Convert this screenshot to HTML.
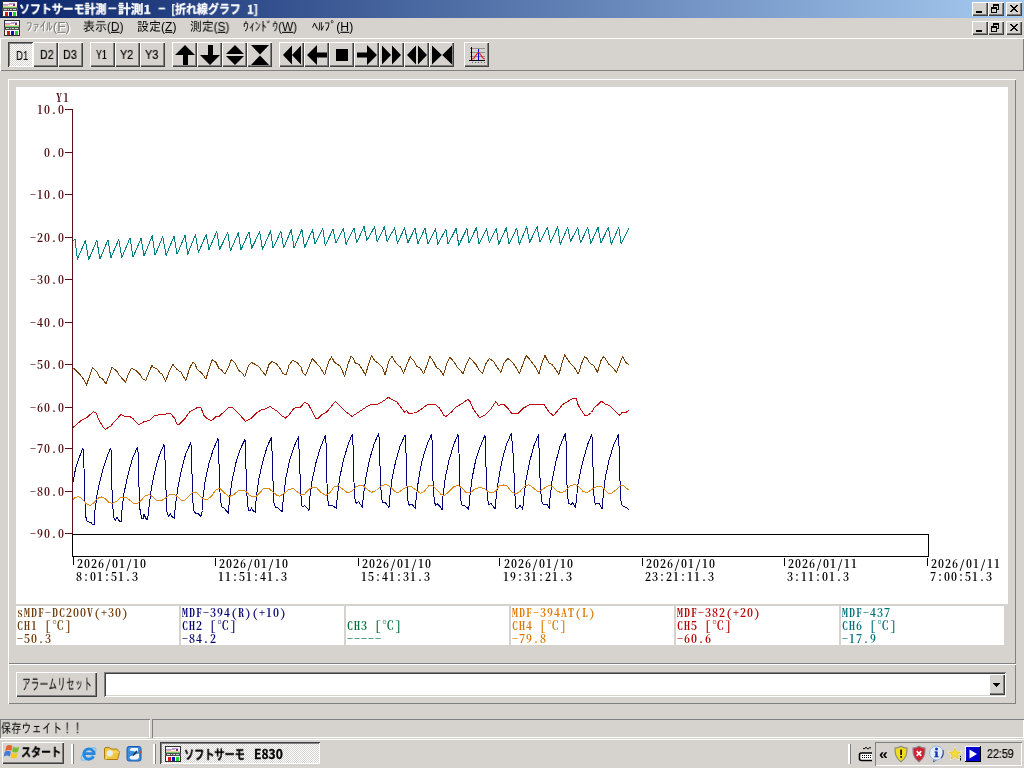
<!DOCTYPE html>
<html lang="ja"><head><meta charset="utf-8"><title>ソフトサーモ計測</title>
<style>
*{box-sizing:border-box;margin:0;padding:0}
html,body{width:1024px;height:768px;overflow:hidden;background:#D6D3CE}
body{position:relative;font-family:"Liberation Sans","IPAGothic","Noto Sans CJK JP",sans-serif;font-size:12px;color:#000}
div,span,svg{position:absolute}
.t{white-space:pre;line-height:1;transform-origin:0 0;will-change:transform}
.btn{background:#D6D3CE;box-shadow:inset 1px 1px 0 #fff,inset -1px -1px 0 #404040,inset -2px -2px 0 #808080}
.btnp{background:#EAE9E6 repeating-conic-gradient(#fff 0% 25%,#D6D3CE 0% 50%) 0 0/2px 2px;box-shadow:inset 1px 1px 0 #404040,inset -1px -1px 0 #fff,inset 2px 2px 0 #808080}
.sunk{box-shadow:inset 1px 1px 0 #808080,inset -1px -1px 0 #fff}
.sunk2{box-shadow:inset 1px 1px 0 #808080,inset -1px -1px 0 #fff,inset 2px 2px 0 #404040,inset -2px -2px 0 #D6D3CE}
.rais{box-shadow:inset 1px 1px 0 #fff,inset -1px -1px 0 #808080}
.mono{will-change:transform;font-family:"Noto Serif CJK SC","IPAGothic","Liberation Mono",monospace;font-feature-settings:"hwid";font-weight:600;font-size:12px;letter-spacing:1px;line-height:13px;white-space:pre;margin-top:-1px}
</style></head>
<body>
<div style="left:0;top:0;width:1024px;height:18px;background:linear-gradient(90deg,#0A246A 0%,#A6CAF0 100%)"></div>
<svg style="left:2px;top:1px" width="16" height="16" viewBox="0 0 16 16" shape-rendering="crispEdges"><rect x="0" y="0" width="16" height="16" fill="#303030"/><rect x="1" y="1" width="14" height="5" fill="#F6F6FE"/><rect x="1" y="3" width="6" height="1" fill="#B09CDC"/><rect x="7" y="2" width="6" height="1" fill="#B09CDC"/><rect x="1" y="4" width="5" height="1" fill="#ECA8B8"/><rect x="6" y="3" width="4" height="1" fill="#E498AC"/><rect x="11" y="3" width="2" height="2" fill="#803070"/><rect x="1" y="5" width="14" height="1" fill="#E8D8A0"/><rect x="1" y="6" width="14" height="1" fill="#70C868"/><rect x="0" y="7" width="16" height="3" fill="#505050"/><rect x="2" y="8" width="3" height="1" fill="#D0D0D0"/><rect x="6" y="8" width="1" height="1" fill="#D0D0D0"/><rect x="8" y="8" width="2" height="1" fill="#D0D0D0"/><rect x="11" y="8" width="3" height="1" fill="#D0D0D0"/><rect x="1" y="10" width="14" height="5" fill="#FFFFFF"/><rect x="3" y="11" width="3" height="4" fill="#D81818"/><rect x="7" y="11" width="3" height="4" fill="#1010C0"/><rect x="11" y="11" width="3" height="4" fill="#18D828"/></svg>
<div id="title" style="left:0;top:0;width:960px;height:18px"><div class="t" id="ta" style="left:18.86px;top:2.97px;font-family:'Noto Sans CJK JP','IPAGothic','Liberation Sans',sans-serif;font-size:12px;font-weight:700;color:#fff;-webkit-text-stroke:.3px #fff;transform:scale(0.910,0.978)">ソフトサーモ計測</div><div class="t" id="tb" style="left:106.96px;top:2.17px;font-family:'Noto Sans CJK JP','IPAGothic','Liberation Sans',sans-serif;font-size:12px;font-weight:700;color:#fff;-webkit-text-stroke:.3px #fff;transform:scale(0.882,0.978)">－</div><div class="t" id="tc" style="left:118.39px;top:2.97px;font-family:'Noto Sans CJK JP','IPAGothic','Liberation Sans',sans-serif;font-size:12px;font-weight:700;color:#fff;-webkit-text-stroke:.3px #fff;transform:scale(1.058,0.978)">計測1</div><div class="t" id="td" style="left:157.99px;top:0.95px;font-family:'Noto Sans CJK JP','IPAGothic','Liberation Sans',sans-serif;font-size:12px;font-weight:700;color:#fff;-webkit-text-stroke:.3px #fff;transform:scale(1.714,0.978)">-</div><div class="t" id="te" style="left:171.36px;top:2.97px;font-family:'Noto Sans CJK JP','IPAGothic','Liberation Sans',sans-serif;font-size:12px;font-weight:700;color:#fff;-webkit-text-stroke:.3px #fff;transform:scale(0.912,0.978)">[折れ線グラフ</div><div class="t" id="tf" style="left:247.20px;top:2.97px;font-family:'Noto Sans CJK JP','IPAGothic','Liberation Sans',sans-serif;font-size:12px;font-weight:700;color:#fff;-webkit-text-stroke:.3px #fff;transform:scale(0.947,0.978)">1]</div></div>
<div class="btn" style="left:972px;top:2px;width:16px;height:14px"><svg width="16" height="14" shape-rendering="crispEdges" style="left:0;top:0"><rect x="4" y="9" width="6" height="2" fill="#000"/></svg></div><div class="btn" style="left:988px;top:2px;width:16px;height:14px"><svg width="16" height="14" shape-rendering="crispEdges" style="left:0;top:0"><rect x="5" y="2" width="6" height="2" fill="#000"/><rect x="5" y="2" width="1" height="4" fill="#000"/><rect x="10" y="2" width="1" height="6" fill="#000"/><rect x="9" y="7" width="2" height="1" fill="#000"/><rect x="3" y="5" width="6" height="2" fill="#000"/><rect x="3" y="5" width="1" height="6" fill="#000"/><rect x="8" y="5" width="1" height="6" fill="#000"/><rect x="3" y="10" width="6" height="1" fill="#000"/></svg></div><div class="btn" style="left:1006px;top:2px;width:16px;height:14px"><svg width="16" height="14" shape-rendering="crispEdges" style="left:0;top:0"><path d="M4 3h2v1h1v1h2v-1h1v-1h2v1h-1v1h-1v1h-1v1h1v1h1v1h1v1h-2v-1h-1v-1h-2v1h-1v1h-2v-1h1v-1h1v-1h1v-1h-1v-1h-1v-1h-1z" fill="#000"/></svg></div>
<svg style="left:4px;top:20px" width="16" height="16" viewBox="0 0 16 16" shape-rendering="crispEdges"><rect x="0" y="0" width="16" height="16" fill="#303030"/><rect x="1" y="1" width="14" height="5" fill="#F6F6FE"/><rect x="1" y="3" width="6" height="1" fill="#B09CDC"/><rect x="7" y="2" width="6" height="1" fill="#B09CDC"/><rect x="1" y="4" width="5" height="1" fill="#ECA8B8"/><rect x="6" y="3" width="4" height="1" fill="#E498AC"/><rect x="11" y="3" width="2" height="2" fill="#803070"/><rect x="1" y="5" width="14" height="1" fill="#E8D8A0"/><rect x="1" y="6" width="14" height="1" fill="#70C868"/><rect x="0" y="7" width="16" height="3" fill="#505050"/><rect x="2" y="8" width="3" height="1" fill="#D0D0D0"/><rect x="6" y="8" width="1" height="1" fill="#D0D0D0"/><rect x="8" y="8" width="2" height="1" fill="#D0D0D0"/><rect x="11" y="8" width="3" height="1" fill="#D0D0D0"/><rect x="1" y="10" width="14" height="5" fill="#FFFFFF"/><rect x="3" y="11" width="3" height="4" fill="#D81818"/><rect x="7" y="11" width="3" height="4" fill="#1010C0"/><rect x="11" y="11" width="3" height="4" fill="#18D828"/></svg>
<div class="btn" style="left:972px;top:21px;width:16px;height:14px"><svg width="16" height="14" shape-rendering="crispEdges" style="left:0;top:0"><rect x="4" y="9" width="6" height="2" fill="#000"/></svg></div><div class="btn" style="left:988px;top:21px;width:16px;height:14px"><svg width="16" height="14" shape-rendering="crispEdges" style="left:0;top:0"><rect x="5" y="2" width="6" height="2" fill="#000"/><rect x="5" y="2" width="1" height="4" fill="#000"/><rect x="10" y="2" width="1" height="6" fill="#000"/><rect x="9" y="7" width="2" height="1" fill="#000"/><rect x="3" y="5" width="6" height="2" fill="#000"/><rect x="3" y="5" width="1" height="6" fill="#000"/><rect x="8" y="5" width="1" height="6" fill="#000"/><rect x="3" y="10" width="6" height="1" fill="#000"/></svg></div><div class="btn" style="left:1006px;top:21px;width:16px;height:14px"><svg width="16" height="14" shape-rendering="crispEdges" style="left:0;top:0"><path d="M4 3h2v1h1v1h2v-1h1v-1h2v1h-1v1h-1v1h-1v1h1v1h1v1h1v1h-2v-1h-1v-1h-2v1h-1v1h-2v-1h1v-1h1v-1h1v-1h-1v-1h-1v-1h-1z" fill="#000"/></svg></div>
<div class="t" id="m0" style="left:26.16px;top:20.48px;font-family:'Liberation Sans','IPAGothic','Noto Sans CJK JP',sans-serif;font-size:12px;font-weight:400;color:#808080;text-shadow:1px 1px 0 #fff;transform:scale(1.118,1.070)">ﾌｧｲﾙ(<u>F</u>)</div>
<div class="t" id="m1" style="left:82.90px;top:20.48px;font-family:'Liberation Sans','IPAGothic','Noto Sans CJK JP',sans-serif;font-size:12px;font-weight:400;color:#000;transform:scale(0.994,1.070)">表示(<u>D</u>)</div>
<div class="t" id="m2" style="left:137.15px;top:20.48px;font-family:'Liberation Sans','IPAGothic','Noto Sans CJK JP',sans-serif;font-size:12px;font-weight:400;color:#000;transform:scale(1.003,1.070)">設定(<u>Z</u>)</div>
<div class="t" id="m3" style="left:190.26px;top:20.48px;font-family:'Liberation Sans','IPAGothic','Noto Sans CJK JP',sans-serif;font-size:12px;font-weight:400;color:#000;transform:scale(0.984,1.070)">測定(<u>S</u>)</div>
<div class="t" id="m4" style="left:242.89px;top:20.48px;font-family:'Liberation Sans','IPAGothic','Noto Sans CJK JP',sans-serif;font-size:12px;font-weight:400;color:#000;transform:scale(0.977,1.070)">ｳｨﾝﾄﾞｳ(<u>W</u>)</div>
<div class="t" id="m5" style="left:311.66px;top:20.48px;font-family:'Liberation Sans','IPAGothic','Noto Sans CJK JP',sans-serif;font-size:12px;font-weight:400;color:#000;transform:scale(1.013,1.070)">ﾍﾙﾌﾟ(<u>H</u>)</div>
<div style="left:0;top:38px;width:1024px;height:33px;box-shadow:inset 1px 1px 0 #fff,inset -1px -1px 0 #808080"></div>
<div class="btnp" style="left:8px;top:42px;width:25px;height:25px"></div>
<div class="btn" style="left:33px;top:42px;width:25px;height:25px"></div>
<div class="btn" style="left:58px;top:42px;width:25px;height:25px"></div>
<div class="btn" style="left:90px;top:42px;width:25px;height:25px"></div>
<div class="btn" style="left:115px;top:42px;width:25px;height:25px"></div>
<div class="btn" style="left:140px;top:42px;width:25px;height:25px"></div>
<div class="t" id="d1" style="left:15.52px;top:49.09px;font-family:'Liberation Sans','IPAGothic',sans-serif;font-size:12px;font-weight:400;color:#000;-webkit-text-stroke:.2px #000;transform:scale(0.800,1.091)">D1</div>
<div class="t" id="d2" style="left:39.81px;top:48.09px;font-family:'Liberation Sans','IPAGothic',sans-serif;font-size:12px;font-weight:400;color:#000;-webkit-text-stroke:.2px #000;transform:scale(0.887,1.091)">D2</div>
<div class="t" id="d3" style="left:63.45px;top:48.09px;font-family:'Liberation Sans','IPAGothic',sans-serif;font-size:12px;font-weight:400;color:#000;-webkit-text-stroke:.2px #000;transform:scale(0.900,1.091)">D3</div>
<div class="t" id="y1" style="left:95.73px;top:48.09px;font-family:'Liberation Sans','IPAGothic',sans-serif;font-size:12px;font-weight:400;color:#000;-webkit-text-stroke:.2px #000;transform:scale(0.732,1.091)">Y1</div>
<div class="t" id="y2" style="left:120.29px;top:48.09px;font-family:'Liberation Sans','IPAGothic',sans-serif;font-size:12px;font-weight:400;color:#000;-webkit-text-stroke:.2px #000;transform:scale(0.900,1.091)">Y2</div>
<div class="t" id="y3" style="left:145.34px;top:48.09px;font-family:'Liberation Sans','IPAGothic',sans-serif;font-size:12px;font-weight:400;color:#000;-webkit-text-stroke:.2px #000;transform:scale(0.907,1.091)">Y3</div>
<div class="btn" style="left:172px;top:42px;width:25px;height:25px"><svg width="25" height="25" viewBox="0 0 25 25" style="left:0;top:0"><g fill="#000"><path d="M13 3L3 13h8v10h5V13h7z"/></g></svg></div>
<div class="btn" style="left:197px;top:42px;width:25px;height:25px"><svg width="25" height="25" viewBox="0 0 25 25" style="left:0;top:0"><g fill="#000"><path d="M13 23L3 13h8V3h5v10h7z"/></g></svg></div>
<div class="btn" style="left:222px;top:42px;width:25px;height:25px"><svg width="25" height="25" viewBox="0 0 25 25" style="left:0;top:0"><g fill="#000"><path d="M13 3L4 12h18zM13 23L4 14h18z"/></g></svg></div>
<div class="btn" style="left:247px;top:42px;width:25px;height:25px"><svg width="25" height="25" viewBox="0 0 25 25" style="left:0;top:0"><g fill="#000"><path d="M4 3h18L13 12.5zM4 23h18L13 13.5z"/></g></svg></div>
<div class="btn" style="left:279px;top:42px;width:25px;height:25px"><svg width="25" height="25" viewBox="0 0 25 25" style="left:0;top:0"><g fill="#000"><path d="M4 13L13 3.5v19zM13 13L22 3.5v19z"/></g></svg></div>
<div class="btn" style="left:304px;top:42px;width:25px;height:25px"><svg width="25" height="25" viewBox="0 0 25 25" style="left:0;top:0"><g fill="#000"><path d="M3 13L13 3v7.5h10v5H13V23z"/></g></svg></div>
<div class="btn" style="left:329px;top:42px;width:25px;height:25px"><svg width="25" height="25" viewBox="0 0 25 25" style="left:0;top:0"><g fill="#000"><rect x="7" y="7" width="12" height="12"/></g></svg></div>
<div class="btn" style="left:354px;top:42px;width:25px;height:25px"><svg width="25" height="25" viewBox="0 0 25 25" style="left:0;top:0"><g fill="#000"><path d="M23 13L13 3v7.5H3v5h10V23z"/></g></svg></div>
<div class="btn" style="left:379px;top:42px;width:25px;height:25px"><svg width="25" height="25" viewBox="0 0 25 25" style="left:0;top:0"><g fill="#000"><path d="M12 13L3 3.5v19zM22 13L13 3.5v19z"/></g></svg></div>
<div class="btn" style="left:404px;top:42px;width:25px;height:25px"><svg width="25" height="25" viewBox="0 0 25 25" style="left:0;top:0"><g fill="#000"><path d="M3 13L12 3.500v19zM23 13L14 3.500v19z"/></g></svg></div>
<div class="btn" style="left:429px;top:42px;width:25px;height:25px"><svg width="25" height="25" viewBox="0 0 25 25" style="left:0;top:0"><g fill="#000"><path d="M12.800 13L3 3.500v19zM13.200 13L23 3.500v19z"/></g></svg></div>
<div class="btn" style="left:464px;top:42px;width:25px;height:25px"><svg width="25" height="25" viewBox="0 0 25 25" style="left:0;top:0"><g shape-rendering="crispEdges"><rect x="6" y="6" width="15" height="1" fill="#909090"/><rect x="6" y="10" width="15" height="1" fill="#909090"/><rect x="6" y="14" width="15" height="1" fill="#909090"/><rect x="7" y="5" width="1" height="14" fill="#000"/><rect x="5" y="18" width="16" height="1" fill="#000"/><rect x="8" y="20" width="1" height="1" fill="#606060"/><rect x="11" y="20" width="1" height="1" fill="#606060"/><rect x="14" y="20" width="1" height="1" fill="#606060"/><rect x="17" y="20" width="1" height="1" fill="#606060"/><rect x="20" y="20" width="1" height="1" fill="#606060"/><rect x="14" y="7" width="1" height="11" fill="#0000E0"/></g><path d="M8 17C11.500 17 12.500 10.500 14.500 10.500S17.500 17 21 17" stroke="#E02020" fill="none" stroke-width="1.200"/></svg></div>
<div class="rais" style="left:8px;top:79px;width:1008px;height:585px"></div>
<div id="chart" style="left:16px;top:87px;width:992px;height:517px;background:#fff"></div>
<div style="left:16px;top:606px;width:163px;height:39px;background:#fff"></div>
<div style="left:17px;top:607px;color:#6E3A08"><div class="mono" style="left:0;top:-1px">sMDF-DC200V(+30)</div><div class="mono" style="left:0;top:12px">CH1 [℃]</div><div class="mono" style="left:0;top:25px">-50.3</div></div>
<div style="left:181px;top:606px;width:163px;height:39px;background:#fff"></div>
<div style="left:182px;top:607px;color:#000070"><div class="mono" style="left:0;top:-1px">MDF-394(R)(+10)</div><div class="mono" style="left:0;top:12px">CH2 [℃]</div><div class="mono" style="left:0;top:25px">-84.2</div></div>
<div style="left:346px;top:606px;width:163px;height:39px;background:#fff"></div>
<div style="left:347px;top:607px;color:#00703A"><div class="mono" style="left:0;top:-1px"></div><div class="mono" style="left:0;top:12px">CH3 [℃]</div><div class="mono" style="left:0;top:25px">-----</div></div>
<div style="left:511px;top:606px;width:163px;height:39px;background:#fff"></div>
<div style="left:512px;top:607px;color:#DC7800"><div class="mono" style="left:0;top:-1px">MDF-394AT(L)</div><div class="mono" style="left:0;top:12px">CH4 [℃]</div><div class="mono" style="left:0;top:25px">-79.8</div></div>
<div style="left:676px;top:606px;width:163px;height:39px;background:#fff"></div>
<div style="left:677px;top:607px;color:#B40000"><div class="mono" style="left:0;top:-1px">MDF-382(+20)</div><div class="mono" style="left:0;top:12px">CH5 [℃]</div><div class="mono" style="left:0;top:25px">-60.6</div></div>
<div style="left:841px;top:606px;width:163px;height:39px;background:#fff"></div>
<div style="left:842px;top:607px;color:#007078"><div class="mono" style="left:0;top:-1px">MDF-437</div><div class="mono" style="left:0;top:12px">CH6 [℃]</div><div class="mono" style="left:0;top:25px">-17.9</div></div>
<svg id="plot" style="left:0;top:0" width="1024" height="768" viewBox="0 0 1024 768">
<g shape-rendering="crispEdges">
<rect x="72" y="109" width="1" height="425" fill="#5C1016"/>
<rect x="65" y="109" width="7" height="1" fill="#5C1016"/>
<rect x="65" y="152" width="7" height="1" fill="#5C1016"/>
<rect x="65" y="194" width="7" height="1" fill="#5C1016"/>
<rect x="65" y="237" width="7" height="1" fill="#5C1016"/>
<rect x="65" y="279" width="7" height="1" fill="#5C1016"/>
<rect x="65" y="322" width="7" height="1" fill="#5C1016"/>
<rect x="65" y="364" width="7" height="1" fill="#5C1016"/>
<rect x="65" y="407" width="7" height="1" fill="#5C1016"/>
<rect x="65" y="448" width="7" height="1" fill="#5C1016"/>
<rect x="65" y="491" width="7" height="1" fill="#5C1016"/>
<rect x="65" y="533" width="7" height="1" fill="#5C1016"/>
<rect x="72.5" y="534.5" width="856" height="22" fill="none" stroke="#000" stroke-width="1"/>
<rect x="73" y="557" width="1" height="8" fill="#000"/>
<rect x="215" y="558" width="1" height="8" fill="#000"/>
<rect x="358" y="558" width="1" height="8" fill="#000"/>
<rect x="499" y="558" width="1" height="8" fill="#000"/>
<rect x="642" y="558" width="1" height="8" fill="#000"/>
<rect x="784" y="558" width="1" height="8" fill="#000"/>
<rect x="927" y="558" width="1" height="8" fill="#000"/>
</g>
<polyline points="73.38,367.75 79,373.38 84,379.62 86.5,385 90.88,372.12 92.75,367.5 97.12,372.12 99.62,377.12 102.75,379 105.88,384 109.62,374 112.12,367.12 116.5,370.88 120.25,376.5 125.5,382.12 129,372.75 131.5,368.38 135.88,370.25 140.25,374.62 142.75,379 145.88,380.25 149,372.12 151.88,365.5 154,367.75 157.12,369 160.25,373.38 162.12,374 165.5,381.25 169.62,370.88 172.75,364.25 177.12,369.62 180.88,372.12 185.88,380.5 189.62,368.12 192.75,362.5 195,363.75 197.12,369.38 201.5,372.75 205.88,379 209,369.38 212.12,359.75 215.88,362.25 219,368.5 221.5,370 225,374 228.38,367.5 231.25,359.75 235.25,363.12 239,370.62 242.12,373.12 244.88,376.88 248.38,365.62 251.5,362.5 255.25,364.38 258.75,366.5 262.12,371.25 265.5,375.25 269,364.38 272.12,361.5 276.5,363.75 280.25,368.75 283,373.75 286.25,375 289,365 292.75,360.25 297.12,362.5 300.88,366.88 302.75,372.75 305.5,375.25 309,366.88 312.12,358.75 315.88,362.5 320.25,367.5 324.62,375 328.38,362.5 331.5,356.88 334.62,362.5 340.25,366.25 344.62,376.25 347.75,365 350.88,356.25 353.38,358.12 355.25,363.12 359,364.38 362.75,370 365.5,375.25 368.38,364.38 371.5,355.62 375.25,361.25 379,363.75 382.75,368.12 385,375.25 389,360.62 392.12,356.25 395.88,363.12 400.25,366.88 403.75,373.12 407.12,363.75 410.25,356.88 414,361.25 416.5,366.25 420.25,368.12 423.75,374 427.12,364.38 430,356.25 433.38,361.25 436.5,367.5 439.62,369.38 443.38,375.25 447.12,362.5 450,357.5 454,361.88 457.12,366.88 463,373.5 466.5,363.75 469.62,357.5 475.88,364.38 479,370 482.5,373.75 485.88,363.75 489.25,358.5 494,361.88 497.12,367.5 500.88,372.25 504,363.12 507.75,358.5 512.12,361.88 516.5,368.12 519.62,373.5 523.38,362.5 526.12,355.62 530.25,360 535.25,366.88 539,373.5 542.12,362.5 545,355.62 549,363.12 552.12,364.38 559,374.38 562.12,362.5 564.62,354.75 569.62,362.5 574,366.88 578.38,374 581.5,363.75 584.62,356.5 587.12,358.5 590.25,363.75 593.38,365 597.5,372.25 600.88,360.62 603.75,356.25 609,364.38 612.12,366.88 616.5,372.25 620.25,362.5 622.5,356.25 625.88,362.5 629,365" fill="none" stroke="#784008" stroke-width="1" stroke-linejoin="round" shape-rendering="crispEdges"/>
<polyline points="73,482 75.88,467 79,458.25 82.75,448.25 83.75,450.75 84,468.25 85,502 85.88,517 87.12,521.75 90.88,522.25 92.12,524.25 94.25,524.5 94.62,513.25 97.12,494.5 100.25,479.5 104,465.75 107.75,454.5 110.62,448.25 111.5,451.38 111.88,487 112.75,507 114,518.25 115.5,520.12 117.12,517.25 119,520.75 121.25,521.75 121.75,512 124,493.25 127.75,475.75 132.12,459.5 137.12,447.62 138.38,453.25 139,487 140,509.5 141.5,518.25 143.38,518.25 144,514.5 146.5,519.5 147.75,518.88 149,507 151.5,487 155.25,469.5 159.62,454.5 164,444.5 165,459.5 165.88,487 166.75,510.75 168.38,516.38 170.25,513.88 172.75,517.62 174.25,518.25 175.25,507 177.75,488.25 181.5,469.5 185.88,453.25 187.75,449.25 190.88,442.38 191.5,453 192.12,478 193,503 194,511.12 195.88,513.62 197.75,513 200.88,516.5 202.5,510.5 202.75,499.25 205.25,480.5 209,463 213.38,449.25 218,438.62 218.75,453 219.38,478 220.25,498 221.5,506.75 224,508 228.38,513.25 229.62,498 232.12,480.5 235.88,463 240.25,449.25 245,439.5 245.62,453 246.25,478 247.12,498 248.38,510.5 250.25,510.5 251.5,508 253.38,511.12 255.25,512.38 256.25,498 259,478 262.75,461.75 267.12,446.75 271.25,437.75 272.12,453 273,480.5 274,503 275.25,507 277.75,508 282.12,511.5 283.38,498 285.88,478 289.62,460.5 294,446.75 298.38,436.75 299.25,453 300.25,480.5 301.5,505.5 303.38,507 304.62,505.5 306.5,507.38 309,510.5 309.62,499.25 312.12,480.5 315.88,463 320.25,448 325.25,435.5 326.25,445.5 326.75,478 327.75,499.25 329,505.5 332.12,505.25 336.5,508.62 337.12,498 339.62,478 343.38,460.5 347.75,445.5 352.12,434.5 353.12,446.75 353.75,478 355,499.25 356.5,504 358.38,501.12 360.25,504.25 362.5,507.38 363.38,495.5 365.88,478 369.62,459.25 374,444.25 378.75,433.25 379.62,445.5 380.25,478 381.5,498 382.75,503 385.25,502.38 389,507.38 390,495.5 392.12,478 395.88,460.5 400.25,445.5 405,435.25 405.88,448 406.75,480.5 407.75,500.5 409.25,505.25 412.12,504.5 415.25,508.25 416.25,498 418.38,480.5 421.5,463 425.88,448 427.75,443 431.5,434.25 432.5,445.5 433,480.5 434.25,500.5 435.5,505.5 437.12,503.62 439.62,506.12 442.12,509.5 442.75,498 445.25,478 449,460.5 453.38,445.5 458,434.5 459,453 459.62,480.5 460.88,500.5 462.12,505.25 465.25,506.12 468.75,509.25 469.62,498 472.12,478 475.88,459.25 479.62,448 485,435.25 485.62,453 486.5,483 487.75,499.25 488.75,504.88 490.88,503 493.38,506.75 495.25,508.62 496.25,495.5 498.75,478 502.12,460.5 506.5,444.25 511.25,433.62 512.75,448 513.75,465.5 514.62,490.5 515.88,508 518.38,508 520,505.25 522.75,509.25 523.75,498 525.88,480.5 529.62,461.75 534,445.5 538.38,434.88 539.25,453 540,478 541.25,498 542.5,504 545.88,504.25 547.12,504.5 549.25,508.25 550,498 552.12,480.5 555.88,461.75 560.25,445.5 565.25,433.62 566.25,443 566.75,480.5 567.75,498 569,503.62 570.88,504.5 572.5,502.75 575.25,507.38 576.5,500.5 577.5,486.75 579.62,475.5 583.38,459.25 587.75,444.25 591.75,434.5 592.75,445.5 593.12,475.5 594,495.5 595.25,504.25 597.12,503 599,503.62 602.12,508.62 603,498 605.25,478 609,460.5 613.38,445.5 618.62,434.25 619.25,453 620,480.5 620.88,500.5 622.12,505.75 625.25,507 629,509.5" fill="none" stroke="#000078" stroke-width="1" stroke-linejoin="round" shape-rendering="crispEdges"/>
<polyline points="73,499.5 75.25,497.25 79,496.75 82.75,499.5 86.5,503.88 90.25,505.5 93.38,503.25 97.75,498.25 101.5,497 104.62,498.25 108.38,502 112.12,503.5 116.5,501.38 120.88,497 125.25,497 129,499.5 133.38,503.25 136.5,503.88 140.25,501.38 145.25,495.75 149.62,494.5 152.75,497 157.12,500.75 160.88,501 165.25,498.25 170.25,494.25 174,494.25 177.75,497 181.5,500.5 184.62,500.5 187.75,497.38 192.12,493 196.5,492.75 200.25,496.12 203.38,499 207.75,499.25 211.5,496.12 215.88,489.88 219.62,488.25 224,492.38 228.38,496.5 232.75,495.5 237.75,491.12 241.5,490.5 245.88,491.12 249.62,495.5 252.75,497 256.5,496.12 260.25,492.38 263.38,488.62 269,488.62 272.75,491.75 277.12,495.5 279.62,496.12 284,493.62 289,489.25 293.38,488.62 297.12,491.75 300.88,494.5 304.62,494.25 309,489.25 312.75,487 316.5,487.75 320.88,492.38 325.88,495.5 329.62,493 334,487 338.38,485.75 342.75,489.25 347.75,493 352.12,491.12 356.5,486.12 362.75,485.5 367.12,489.25 371.5,492.38 376.5,490.5 381.5,485.5 386.5,484.5 390.88,487.38 395.25,491.75 397.75,493 402.75,489.25 407.75,486.5 411.5,486.75 416.5,490.5 420.25,493.25 424.62,491.12 429,485.5 432.12,485.5 436.5,489.25 440.88,494.25 444,495.5 448.38,492.38 453.38,487 458.38,485.25 462.12,488.25 466.5,493 470.88,492.38 475.25,488.62 480.88,487.38 485.25,489.25 489,492 491.5,493 495.25,491.5 499,486.12 504,484.88 507.12,486.12 511.5,491.75 515.88,494.25 520.25,491.12 525.25,485.5 529,484.88 532.75,487.38 537.12,491.12 539.62,491.5 543.38,488.62 549,485.25 552.75,486.75 557.12,491.12 561.5,492.75 565.25,491.12 570.25,485.75 575.25,484.5 579,486.75 583.38,491.75 587.75,492.38 592.12,489.25 596.5,486.5 600.88,486.12 604,488.62 607.75,493 611.5,493.25 615.88,489.88 619.62,486.12 622.75,485.25 625.88,487.75 629,490.25" fill="none" stroke="#E08818" stroke-width="1" stroke-linejoin="round" shape-rendering="crispEdges"/>
<polyline points="73,427.5 81.5,420.25 86.5,417.75 93.38,411.75 95.88,412.5 99,420.25 102.75,426.5 105.5,429.25 110.88,425.88 114,422.12 120.88,414.62 125.25,416.75 129.62,416.5 132.75,418.38 135.88,422.12 139,424.62 144,421.75 149.62,420.25 154.62,415.5 160.25,414.62 165.25,414.25 170.25,413 174.62,418.38 177.12,424.25 179.62,424 184.62,419 189.62,411.88 193.38,410 197.75,407.25 200.88,407.5 204,415.62 207.12,418.75 211.5,420.62 216.25,416.5 219.62,416 228.38,407.5 232.12,407.5 236.5,411.25 245.5,421.25 251.5,418.12 255.88,413.5 262.12,409.38 265.25,409 270,406.5 277.12,411.25 280.88,415 285.25,418.12 289,415 294,408.12 300.25,407.25 304.62,402.5 308.38,404.38 312.12,411.25 315.88,418.5 318.38,418.12 321.5,415 326.5,412.25 335.25,401.5 346.5,412.25 352.12,416.5 359,411.88 366.5,406.88 370.88,404.38 378.38,404 384,400.62 388.38,397.25 392.75,400 397.12,402.25 404.62,412.25 406.5,410.62 409,413.5 415.88,412.75 421.5,409 427.75,404.38 435.25,404.38 439.62,408.12 444,415.62 445.88,416.5 450.88,412.5 455.88,407.25 462.75,403.12 467.75,399.38 470.25,401.88 473.38,409.38 479.62,417.5 485.25,414.75 490.25,410 495.88,401.5 498.38,405.25 504,404.38 507.75,408.12 511.5,413.12 518.38,413.12 523.38,408.12 529.62,404.75 544,404.38 549,411.88 553.38,415.62 557.75,410.62 562.75,404.38 573.38,398.12 576.25,398.75 578.38,405.62 584.62,415.25 587.75,415.25 591.5,412.5 594,408.12 601.5,401.25 605.25,404 609,405.25 612.75,408.75 619.62,415.25 622.12,412.5 625.25,412.75 629,410.25" fill="none" stroke="#C00810" stroke-width="1" stroke-linejoin="round" shape-rendering="crispEdges"/>
<polyline points="73,241 75,239.12 77.38,259.12 85.5,240.38 88.62,259.75 96.88,240.38 99.88,259.12 108,239.75 110.88,257.88 118.75,239.5 121.75,257.88 130,237.88 133,257.25 141,238.5 144,256 152.25,235.75 155,255.38 162.75,236.62 166.12,255.38 174,236.25 177.12,254.12 185,235.38 187.75,254.12 195.5,234.5 198.38,252.62 206.12,234.5 209,249.5 216.75,231.38 219.62,249.5 227.75,232.62 230.5,250.75 238.38,232.62 240.88,250.12 249,231.75 251.75,248.25 259.62,231.75 262.5,249.5 270.62,230.75 273,248.25 280.88,231.38 283.75,248 291.25,229.5 294,248 301.88,229.5 304.62,247.62 312.5,229.5 315,244.25 322.75,228.38 325.25,245.5 333,229.25 335.88,243 343.38,228.38 346.12,244.25 354,227.75 356.75,242.75 364,226.5 366.88,240.5 374.62,226.75 377.12,242 384.38,226.75 387.12,241.5 394.62,227.75 397.5,243.25 404.62,227.75 407.75,243 415,228.38 418,243.62 425,228 428,244.25 435.5,228.62 437.75,244.25 445.88,229.25 448,244.25 456.12,228.38 458.75,245.25 466.88,228.62 469,243 476.5,227.38 479,244.25 486.5,228.62 489.25,242.38 496.25,228.62 498.75,244.25 506.25,227.75 509,244.25 516.75,228 519.25,244.25 526.75,226.75 529.62,242.38 537.12,226.75 540,242.38 547.5,227.38 550.5,242.38 557.75,226.75 560.25,244.25 567.75,227.38 570.5,241.5 577.75,227.38 580.5,243 587.75,227.38 590.88,243.25 598,227.38 600.88,243 608.38,227.38 611.25,244.25 618.75,227.38 621.12,243.62 629,228.25" fill="none" stroke="#008080" stroke-width="1" stroke-linejoin="round" shape-rendering="crispEdges"/>
</svg>
<div class="mono" style="left:56px;top:91px;color:#500A10">Y1</div>
<div class="mono" style="left:37px;top:103px;color:#500A10">10.0</div>
<div class="mono" style="left:44px;top:146px;color:#500A10">0.0</div>
<div class="mono" style="left:30px;top:188px;color:#500A10">-10.0</div>
<div class="mono" style="left:30px;top:231px;color:#500A10">-20.0</div>
<div class="mono" style="left:30px;top:273px;color:#500A10">-30.0</div>
<div class="mono" style="left:30px;top:316px;color:#500A10">-40.0</div>
<div class="mono" style="left:30px;top:358px;color:#500A10">-50.0</div>
<div class="mono" style="left:30px;top:401px;color:#500A10">-60.0</div>
<div class="mono" style="left:30px;top:442px;color:#500A10">-70.0</div>
<div class="mono" style="left:30px;top:485px;color:#500A10">-80.0</div>
<div class="mono" style="left:30px;top:527px;color:#500A10">-90.0</div>
<div style="left:77px;top:557px;color:#000"><div class="mono" style="left:0;top:0">2026/01/10</div><div class="mono" style="left:-1px;top:13px">8:01:51.3</div></div>
<div style="left:219px;top:557px;color:#000"><div class="mono" style="left:0;top:0">2026/01/10</div><div class="mono" style="left:-1px;top:13px">11:51:41.3</div></div>
<div style="left:362px;top:557px;color:#000"><div class="mono" style="left:0;top:0">2026/01/10</div><div class="mono" style="left:-1px;top:13px">15:41:31.3</div></div>
<div style="left:504px;top:557px;color:#000"><div class="mono" style="left:0;top:0">2026/01/10</div><div class="mono" style="left:-1px;top:13px">19:31:21.3</div></div>
<div style="left:646px;top:557px;color:#000"><div class="mono" style="left:0;top:0">2026/01/10</div><div class="mono" style="left:-1px;top:13px">23:21:11.3</div></div>
<div style="left:788px;top:557px;color:#000"><div class="mono" style="left:0;top:0">2026/01/11</div><div class="mono" style="left:-1px;top:13px">3:11:01.3</div></div>
<div style="left:931px;top:557px;color:#000"><div class="mono" style="left:0;top:0">2026/01/11</div><div class="mono" style="left:-1px;top:13px">7:00:51.3</div></div>
<div class="rais" style="left:8px;top:664px;width:1008px;height:40px"></div>
<div class="btn" style="left:16px;top:672px;width:81px;height:25px"></div>
<div class="t" id="al" style="left:22.30px;top:677.35px;font-family:'Liberation Sans','IPAGothic','Noto Sans CJK JP',sans-serif;font-size:12px;font-weight:400;color:#000;transform:scale(0.732,1.300)">アラームリセット</div>
<div class="sunk2" style="left:104px;top:672px;width:902px;height:25px;background:#fff"></div>
<div class="btn" style="left:989px;top:674px;width:16px;height:21px"><svg width="16" height="21" style="left:0;top:0" shape-rendering="crispEdges"><path d="M4 9h7v1h-1v1h-1v1h-1v1h-1v-1h-1v-1h-1v-1h-1z" fill="#000"/></svg></div>
<div class="sunk" style="left:0;top:719px;width:150px;height:19px"></div>
<div class="sunk" style="left:152px;top:719px;width:872px;height:19px"></div>
<div class="t" id="st" style="left:1.22px;top:722.00px;font-family:'Liberation Sans','IPAGothic','Noto Sans CJK JP',sans-serif;font-size:12px;font-weight:400;color:#000;transform:scale(0.850,1.116)">保存ウェイト！！</div>
<div style="left:0;top:739px;width:1024px;height:1px;background:#fff"></div>
<div class="btn" style="left:2px;top:742px;width:62px;height:22px"></div>
<svg style="left:3px;top:744px" width="18" height="16" viewBox="3 744 18 16"><path d="M6.300 746.300c2-1.600 4.200-1.500 6.200-.2l-1.100 4.900c-2-1.300-4.200-1.400-6.200.2z" fill="#E8642C"/><path d="M13.200 746.700c2 1.200 4 1.200 6 0l-1.100 4.900c-2 1.200-4 1.200-6 0z" fill="#78BE28"/><path d="M4.700 751.900c2-1.600 4.200-1.500 6.200-.2l-1.100 4.900c-2-1.300-4.200-1.400-6.200.2z" fill="#4678DC"/><path d="M11.700 752.500c2 1.200 4 1.200 6 0l-1.100 4.900c-2 1.200-4 1.200-6 0z" fill="#F4C81E"/></svg>
<div class="t" id="sb" style="left:21.46px;top:745.62px;font-family:'Noto Sans CJK JP','IPAGothic','Liberation Sans',sans-serif;font-size:12px;font-weight:700;color:#000;-webkit-text-stroke:.35px #000;transform:scale(0.835,0.977)">スタート</div>
<div style="left:71px;top:744px;width:3px;height:20px;box-shadow:inset 2px 0 0 #fff,inset -1px 0 0 #808080"></div>
<div style="left:153px;top:744px;width:3px;height:20px;box-shadow:inset 2px 0 0 #fff,inset -1px 0 0 #808080"></div>
<div style="left:848px;top:744px;width:3px;height:20px;box-shadow:inset 2px 0 0 #fff,inset -1px 0 0 #808080"></div>
<svg style="left:79px;top:745px" width="19" height="18" viewBox="79 745 19 18"><ellipse cx="88.500" cy="754" rx="9" ry="3.600" transform="rotate(-38 88.500 754)" fill="none" stroke="#7EC4F6" stroke-width="1.400"/><path d="M93.600 756.300a5.200 5.200 0 1 1 .5-2.600h-9.500" fill="none" stroke="#2488E0" stroke-width="2.800"/></svg>
<svg style="left:103px;top:745px" width="18" height="18" viewBox="103 745 18 18"><path d="M104.500 749q0-1.500 1.500-1.500h3.500l1.500 1.500h5.500q1.500 0 1.500 1.500v1h1.800l-2.300 8h-12q-1 0-1-1z" fill="#F0C443" stroke="#B07C10" stroke-width="1"/><path d="M106 759.500l2.300-7.500h11.400" fill="none" stroke="#FBE28A" stroke-width="1"/><circle cx="109.800" cy="753.300" r="3" fill="#DCF0FA" stroke="#F6E6B0" stroke-width="1"/></svg>
<svg style="left:126px;top:745px" width="18" height="18" viewBox="126 745 18 18"><rect x="127" y="746.500" width="14" height="14.500" rx="2" fill="#3C8CDC" stroke="#1C5CB0" stroke-width="1"/><path d="M130 750.500q0-2 2-2h5.500v3.500M138.500 754v3q0 2-2 2h-5q-1.500 0-1.500-2z" fill="#E8F4FF" stroke="#fff" stroke-width="1"/><path d="M137 751l-4 4.500" stroke="#203040" stroke-width="1.500"/><circle cx="140.800" cy="752" r="1" fill="#E04020"/></svg>
<div class="btnp" style="left:160px;top:742px;width:160px;height:22px"></div>
<svg style="left:165px;top:746px" width="16" height="16" viewBox="0 0 16 16" shape-rendering="crispEdges"><rect x="0" y="0" width="16" height="16" fill="#303030"/><rect x="1" y="1" width="14" height="5" fill="#F6F6FE"/><rect x="1" y="3" width="6" height="1" fill="#B09CDC"/><rect x="7" y="2" width="6" height="1" fill="#B09CDC"/><rect x="1" y="4" width="5" height="1" fill="#ECA8B8"/><rect x="6" y="3" width="4" height="1" fill="#E498AC"/><rect x="11" y="3" width="2" height="2" fill="#803070"/><rect x="1" y="5" width="14" height="1" fill="#E8D8A0"/><rect x="1" y="6" width="14" height="1" fill="#70C868"/><rect x="0" y="7" width="16" height="3" fill="#505050"/><rect x="2" y="8" width="3" height="1" fill="#D0D0D0"/><rect x="6" y="8" width="1" height="1" fill="#D0D0D0"/><rect x="8" y="8" width="2" height="1" fill="#D0D0D0"/><rect x="11" y="8" width="3" height="1" fill="#D0D0D0"/><rect x="1" y="10" width="14" height="5" fill="#FFFFFF"/><rect x="3" y="11" width="3" height="4" fill="#D81818"/><rect x="7" y="11" width="3" height="4" fill="#1010C0"/><rect x="11" y="11" width="3" height="4" fill="#18D828"/></svg>
<div class="t" id="tk" style="left:184.05px;top:746.56px;font-family:'Noto Sans CJK JP','IPAGothic','Liberation Sans',sans-serif;font-size:12px;font-weight:700;color:#000;-webkit-text-stroke:.3px #000;transform:scale(0.844,1.073)">ソフトサーモ</div>
<div class="t" id="tk2" style="left:253.78px;top:746.56px;font-family:'Noto Sans CJK JP','IPAGothic','Liberation Sans',sans-serif;font-size:12px;font-weight:700;color:#000;-webkit-text-stroke:.3px #000;transform:scale(1.006,1.073)">E830</div>
<svg style="left:858px;top:746px" width="14" height="16" viewBox="858 746 14 16"><path d="M863 748.200q1 1.800 2 0t2 0 2 0 2 0" fill="none" stroke="#000" stroke-width="1"/><path d="M872 753h-10.500q-2 0-2 2v3.500q0 2 2 2h10.500" fill="#fff" stroke="#000" stroke-width="1.600"/><path d="M862 755.500h10M862 757.500h10" stroke="#000" stroke-width="1" stroke-dasharray="1 1"/></svg>
<div class="sunk" style="left:875px;top:742px;width:147px;height:24px"></div>
<div class="t" id="ch" style="left:879.34px;top:746.79px;font-family:'Liberation Sans','IPAGothic',sans-serif;font-size:12px;font-weight:700;color:#000;transform:scale(1.322,1.158)">«</div>
<svg style="left:892.5px;top:745px" width="16" height="18" viewBox="0 0 16 18"><path d="M8 1.300c1.800 1.300 3.800 1.900 6 1.900 0 6-.8 10-6 13.500C2.800 13.200 2 9.200 2 3.200c2.200 0 4.200-.6 6-1.900z" fill="#F2DC1E" stroke="#8C8C78" stroke-width="1.200"/><rect x="7.200" y="4.500" width="1.800" height="5.500" fill="#201800"/><rect x="7.200" y="11" width="1.800" height="1.800" fill="#201800"/></svg>
<svg style="left:910.5px;top:745px" width="16" height="18" viewBox="0 0 16 18"><path d="M8 1.300c1.800 1.300 3.800 1.900 6 1.900 0 6-.8 10-6 13.500C2.800 13.200 2 9.200 2 3.200c2.200 0 4.200-.6 6-1.900z" fill="#D2202E" stroke="#8C7C88" stroke-width="1.200"/><path d="M5.700 6.200l4.600 4.600M10.300 6.200l-4.600 4.600" stroke="#fff" stroke-width="1.800"/></svg>
<svg style="left:928px;top:745px" width="18" height="18" viewBox="928 745 18 18"><path d="M934 759l-.5 3 3.500-2.500" fill="#C8DCF4" stroke="#5070A0" stroke-width="1"/><circle cx="936.500" cy="753" r="7" fill="#E4EEFA" stroke="#9CB4D8" stroke-width="1"/><path d="M941 758q3-3 2-8" fill="none" stroke="#405880" stroke-width="1.200"/><rect x="935.300" y="751.500" width="2.400" height="5.500" fill="#1438B8"/><rect x="934.500" y="751.500" width="2" height="1" fill="#1438B8"/><rect x="934.300" y="756.300" width="4.400" height="1" fill="#1438B8"/><circle cx="936.500" cy="749" r="1.500" fill="#1438B8"/></svg>
<svg style="left:948px;top:746px" width="15" height="15" viewBox="948 746 15 15"><path d="M954.800 748l1.700 3.800 4.200.3-3.200 2.800 1 4.100-3.700-2.200-3.700 2.200 1-4.100-3.200-2.800 4.200-.3z" fill="#F4DC3C" stroke="#FFF8D0" stroke-width="1.400"/><path d="M954.800 748l1.700 3.800 4.200.3-3.200 2.800 1 4.100-3.700-2.200-3.700 2.200 1-4.100-3.200-2.800 4.200-.3z" fill="#F4DC3C" stroke="#C8A820" stroke-width=".5"/><rect x="960" y="756" width="1" height="1" fill="#000"/><rect x="960" y="758" width="1" height="2.500" fill="#000"/></svg>
<svg style="left:965px;top:746px" width="16" height="16" viewBox="0 0 16 16" shape-rendering="crispEdges"><rect width="16" height="16" fill="#000"/><rect width="15" height="15" fill="#fff"/><rect x="1" y="1" width="14" height="14" fill="#0000D2"/><path d="M4.500 3.500l7.500 4.500-7.500 4.500z" fill="#fff" shape-rendering="auto"/></svg>
<div class="t" id="ck" style="left:987.34px;top:748.16px;font-family:'Liberation Sans','IPAGothic',sans-serif;font-size:12px;font-weight:400;color:#000;-webkit-text-stroke:.2px #000;transform:scale(0.890,1.029)">22:59</div>
</body></html>
